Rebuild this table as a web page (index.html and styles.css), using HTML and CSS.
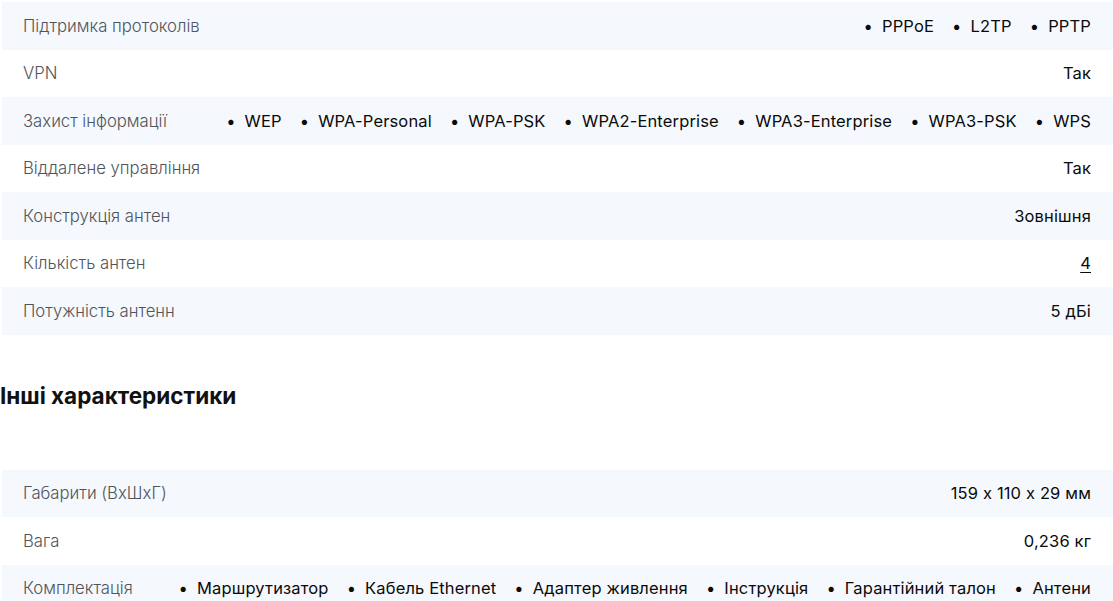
FILE: index.html
```html
<!DOCTYPE html>
<html lang="uk">
<head>
  <meta charset="UTF-8">
  <meta name="viewport" content="width=device-width, initial-scale=1.0">
  <title>Характеристики</title>
  <link rel="stylesheet" href="styles.css">
</head>
<body>
  <div class="specs">
    <div class="row">
      <span class="label">Підтримка протоколів</span>
      <ul class="values"><li>PPPoE</li><li>L2TP</li><li>PPTP</li></ul>
    </div>
    <div class="row">
      <span class="label">VPN</span>
      <span class="value">Так</span>
    </div>
    <div class="row">
      <span class="label">Захист інформації</span>
      <ul class="values"><li>WEP</li><li>WPA-Personal</li><li>WPA-PSK</li><li>WPA2-Enterprise</li><li>WPA3-Enterprise</li><li>WPA3-PSK</li><li>WPS</li></ul>
    </div>
    <div class="row">
      <span class="label">Віддалене управління</span>
      <span class="value">Так</span>
    </div>
    <div class="row">
      <span class="label">Конструкція антен</span>
      <span class="value">Зовнішня</span>
    </div>
    <div class="row">
      <span class="label">Кількість антен</span>
      <a class="value link" href="#">4</a>
    </div>
    <div class="row">
      <span class="label">Потужність антенн</span>
      <span class="value">5 дБі</span>
    </div>
  </div>

  <h2 class="section-title">Інші характеристики</h2>

  <div class="specs">
    <div class="row">
      <span class="label">Габарити (ВхШхГ)</span>
      <span class="value">159 x 110 x 29 мм</span>
    </div>
    <div class="row">
      <span class="label">Вага</span>
      <span class="value">0,236 кг</span>
    </div>
    <div class="row">
      <span class="label">Комплектація</span>
      <ul class="values"><li>Маршрутизатор</li><li>Кабель Ethernet</li><li>Адаптер живлення</li><li>Інструкція</li><li>Гарантійний талон</li><li>Антени</li></ul>
    </div>
  </div>
</body>
</html>
```

FILE: styles.css
```css
body {
  margin: 0;
  font-family: Inter, 'Noto Sans', sans-serif;
  font-feature-settings: "calt" 0;
  background-color: #ffffff;
  color: #111111;
  overflow: hidden;
}
.specs {
  padding-left: 2px;
}
.specs:first-child {
  padding-top: 2px;
}
.row {
  display: flex;
  align-items: center;
  justify-content: space-between;
  height: 47.5px;
  padding: 0 22px 0 21px;
}
.row:nth-child(odd) {
  background-color: #f5f8fc;
}
.label {
  font-size: 16.7px;
  font-weight: 300;
  color: #50555b;
  white-space: nowrap;
}
.value {
  font-size: 16.5px;
  font-weight: 400;
  letter-spacing: 0.15px;
  color: #0a0a0a;
}
.link {
  color: #0a0a0a;
  text-decoration: underline;
  text-underline-offset: 3px;
}
.values {
  display: flex;
  gap: 18px;
  list-style: none;
  margin: 0;
  padding: 0;
  font-size: 16.5px;
  font-weight: 400;
  letter-spacing: 0.15px;
  color: #0a0a0a;
  white-space: nowrap;
}
.values li::before {
  content: "\2022";
  margin-right: 9px;
}
.section-title {
  margin: 49px 0 62px;
  font-size: 22.5px;
  font-weight: 700;
  line-height: 24px;
  color: #111111;
}
```
